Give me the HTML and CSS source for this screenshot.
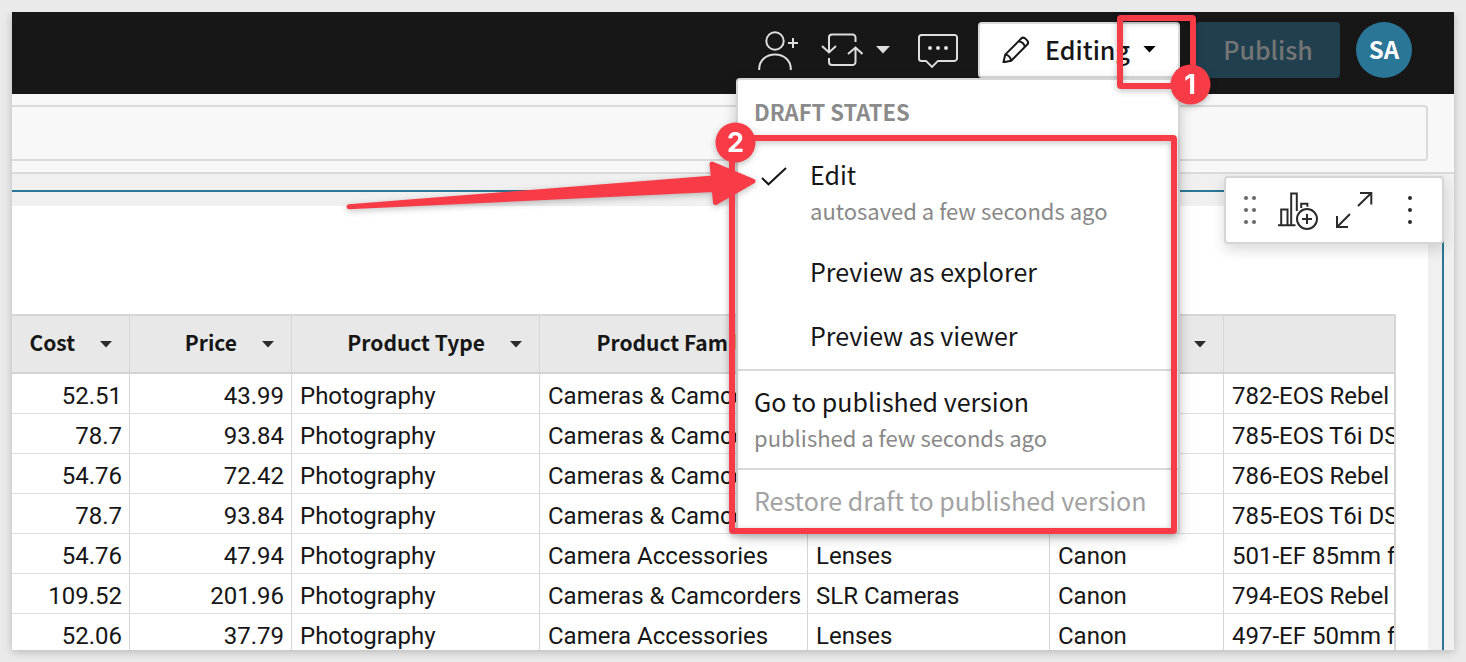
FILE: index.html
```html
<!DOCTYPE html>
<html lang="en">
<head>
<meta charset="utf-8">
<meta name="viewport" content="width=device-width, initial-scale=1">
<title>Workbook draft</title>
<link rel="stylesheet" href="styles.css">
</head>
<body>
<div class="frame">
  <header class="topbar">
    <button class="icon-btn" type="button" aria-label="Share">
      <svg class="line-icon" width="40" height="40" viewBox="758 30 40 40"><circle cx="775" cy="41" r="8.7"/><path d="M759.2 70v-1c0-8.600 7-14.500 15.800-14.500s15.800 5.900 15.800 14.500v1M788 43h10M793 38v10"/></svg>
    </button>
    <button class="icon-btn sync" type="button" aria-label="Refresh">
      <svg class="line-icon" width="42" height="40" viewBox="821 30 42 40"><path d="M829 52V37.500a3 3 0 0 1 3-3h20.500a3 3 0 0 1 3 3V42M855.500 48v14a3 3 0 0 1-3 3H832a3 3 0 0 1-3-3v-4M822 46l7 6.500 7-6.500M848 54l7.500-6.500 7 6.500"/></svg>
      <svg width="14" height="8" viewBox="0 0 14 8"><path class="light" d="M0 0h14L7 7.500z"/></svg>
    </button>
    <button class="icon-btn chat" type="button" aria-label="Comments">
      <svg class="line-icon" width="40" height="40" viewBox="918 30 40 40"><path d="M921.500 34.900h33a2.500 2.500 0 0 1 2.500 2.500v21a2.500 2.500 0 0 1-2.500 2.500H938l-6 6-6-6h-4.500a2.500 2.500 0 0 1-2.500-2.500v-21a2.500 2.500 0 0 1 2.500-2.500z"/><g class="light"><circle cx="930" cy="48" r="2"/><circle cx="938" cy="48" r="2"/><circle cx="946" cy="48" r="2"/></g></svg>
    </button>
    <div class="mode">
      <button class="mode-btn" type="button" aria-haspopup="menu" aria-expanded="true">
        <svg class="dark-line" width="28" height="28" viewBox="1002 35 28 28"><path d="M1003.500 62.300l1.700-7.700 16.300-16.300c2.300-2.300 8.300 3.200 6 6l-16.300 16.400zM1018.700 41.200c3 .3 5.800 2.800 6 5.800M1005.200 54.600c3 .3 5.800 3 6 6.100"/></svg>
        <span>Editing</span>
        <svg width="13" height="7" viewBox="0 0 14 8"><path d="M0 0h14L7 7.500z"/></svg>
      </button>
      <div class="menu" role="menu">
        <h2 class="menu-title">DRAFT STATES</h2>
        <button class="item indent checked" type="button" role="menuitem">
          <svg class="check" width="26" height="20" viewBox="761 166 26 20"><path d="M762 178l6.500 6.300L786 168"/></svg>
          <span class="label">Edit</span>
          <span class="note">autosaved a few seconds ago</span>
        </button>
        <button class="item indent" type="button" role="menuitem"><span class="label">Preview as explorer</span></button>
        <button class="item indent" type="button" role="menuitem"><span class="label">Preview as viewer</span></button>
        <button class="item divided" type="button" role="menuitem">
          <span class="label">Go to published version</span>
          <span class="note">published a few seconds ago</span>
        </button>
        <button class="item divided" type="button" role="menuitem" disabled><span class="label">Restore draft to published version</span></button>
      </div>
      <svg class="callouts" width="880" height="540" viewBox="340 10 880 540" aria-hidden="true">
        <rect class="outline" x="1120" y="18" width="73" height="68" rx="1"/>
        <rect class="outline" x="732" y="138" width="442" height="393" rx="1"/>
        <path class="arrow" d="M349 206.700L713.500 178l-1.500-14 41 17.200-37.500 21.300-1.300-13z"/>
        <circle cx="1190.500" cy="84.500" r="20"/>
        <circle cx="735.500" cy="142.500" r="20"/>
        <text x="1190" y="94">1</text>
        <text x="735.500" y="152">2</text>
      </svg>
    </div>
    <button class="publish" type="button" disabled>Publish</button>
    <button class="avatar" type="button" aria-label="Account">SA</button>
  </header>
  <div class="formula-bar"><input class="formula" type="text" aria-label="Formula"></div>
  <main class="canvas">
    <section class="element">
      <div class="sheet">
        <div class="table-wrap">
          <table>
            <colgroup><col class="c-cost"><col class="c-price"><col class="c-type"><col class="c-family"><col class="c-line"><col class="c-brand"><col></colgroup>
            <thead>
              <tr>
                <th><div>Cost<svg class="caret" viewBox="0 0 14 8"><path d="M0 0h14L7 7.500z"/></svg></div></th>
                <th><div>Price<svg class="caret" viewBox="0 0 14 8"><path d="M0 0h14L7 7.500z"/></svg></div></th>
                <th><div>Product Type<svg class="caret" viewBox="0 0 14 8"><path d="M0 0h14L7 7.500z"/></svg></div></th>
                <th><div>Product Family<svg class="caret" viewBox="0 0 14 8"><path d="M0 0h14L7 7.500z"/></svg></div></th>
                <th><div><svg class="caret" viewBox="0 0 14 8"><path d="M0 0h14L7 7.500z"/></svg></div></th>
                <th><div><svg class="caret" viewBox="0 0 14 8"><path d="M0 0h14L7 7.500z"/></svg></div></th>
                <th></th>
              </tr>
            </thead>
            <tbody>
              <tr><td class="num">52.51</td><td class="num">43.99</td><td>Photography</td><td>Cameras &amp; Camcorders</td><td></td><td></td><td>782-EOS Rebel</td></tr>
              <tr><td class="num">78.7</td><td class="num">93.84</td><td>Photography</td><td>Cameras &amp; Camcorders</td><td></td><td></td><td>785-EOS T6i DSLR</td></tr>
              <tr><td class="num">54.76</td><td class="num">72.42</td><td>Photography</td><td>Cameras &amp; Camcorders</td><td></td><td></td><td>786-EOS Rebel</td></tr>
              <tr><td class="num">78.7</td><td class="num">93.84</td><td>Photography</td><td>Cameras &amp; Camcorders</td><td></td><td></td><td>785-EOS T6i DSLR</td></tr>
              <tr><td class="num">54.76</td><td class="num">47.94</td><td>Photography</td><td>Camera Accessories</td><td>Lenses</td><td>Canon</td><td>501-EF 85mm f</td></tr>
              <tr><td class="num">109.52</td><td class="num">201.96</td><td>Photography</td><td>Cameras &amp; Camcorders</td><td>SLR Cameras</td><td>Canon</td><td>794-EOS Rebel</td></tr>
              <tr><td class="num">52.06</td><td class="num">37.79</td><td>Photography</td><td>Camera Accessories</td><td>Lenses</td><td>Canon</td><td>497-EF 50mm f</td></tr>
            </tbody>
          </table>
        </div>
      </div>
    </section>
    <div class="element-tools">
      <button type="button" aria-label="Move"><svg class="grip" width="14" height="30" viewBox="1243 195 14 30"><circle cx="1246" cy="198" r="2"/><circle cx="1254" cy="198" r="2"/><circle cx="1246" cy="210" r="2"/><circle cx="1254" cy="210" r="2"/><circle cx="1246" cy="222" r="2"/><circle cx="1254" cy="222" r="2"/></svg></button>
      <button type="button" aria-label="Add chart"><svg class="tool" width="42" height="40" viewBox="1277 190 42 40"><path d="M1278 225.300h17.500M1281.200 225v-15.500h6.300V225M1291.200 225v-31.500h5.600V211M1301.200 208v-4.200h6.200v3"/><circle cx="1307" cy="219" r="10"/><path d="M1302 219h10M1307 214v10"/></svg></button>
      <button type="button" aria-label="Maximize"><svg class="tool" width="38" height="38" viewBox="1335 191 38 38"><path d="M1360 193h11.300v11.500M1371 193.300L1358 206M1337 216v11h11M1337.300 226.700L1350 214"/></svg></button>
      <button type="button" aria-label="More"><svg class="more" width="6" height="30" viewBox="1407 195 6 30"><circle cx="1410" cy="198" r="2"/><circle cx="1410" cy="210" r="2"/><circle cx="1410" cy="222" r="2"/></svg></button>
    </div>
  </main>
</div>
</body>
</html>
```

FILE: styles.css
```css
* { box-sizing: border-box; }

body {
  margin: 0;
  padding: 12px;
  background: #eaeaea;
  color: #161616;
  font-family: "Noto Sans CJK SC", "Open Sans", sans-serif;
  font-size: 24px;
}

button {
  margin: 0;
  padding: 0;
  border: 0;
  background: none;
  color: inherit;
  font: inherit;
}

svg { display: block; flex: none; }

.frame {
  display: flex;
  flex-direction: column;
  height: calc(100vh - 24px);
  overflow: hidden;
  background: #f0f0f0;
  box-shadow: 0 2px 8px rgba(0, 0, 0, 0.22);
  clip-path: inset(0 -12px -12px -12px);
}

.topbar {
  position: relative;
  z-index: 2;
  display: flex;
  flex: none;
  align-items: center;
  justify-content: flex-end;
  gap: 16px;
  padding: 10px 42px 16px 16px;
  background: #171717;
}

.icon-btn { display: flex; align-items: center; gap: 13px; }
.sync { margin-left: 7px; }
.chat { margin: 0 4px 0 12px; }
.line-icon { fill: none; stroke: #dedede; stroke-width: 2; }
.light { fill: #dedede; stroke: none; }

.mode { position: relative; width: 202px; }

.mode-btn {
  display: flex;
  align-items: center;
  justify-content: center;
  width: 100%;
  height: 56px;
  padding: 0 0 2px;
  border: 2px solid #dadada;
  border-radius: 4px;
  background: #fff;
  font-size: 25px;
  font-weight: 500;
}
.mode-btn span { margin: 0 13px 0 15px; }
.dark-line { fill: none; stroke: #161616; stroke-width: 2; stroke-linejoin: round; }

.menu {
  position: absolute;
  top: 56px;
  right: 0;
  width: 444px;
  padding: 13px 0 0;
  border: 2px solid #d6d6d6;
  border-radius: 4px;
  background: #fff;
  box-shadow: 0 4px 14px rgba(0, 0, 0, 0.2);
}

.menu-title {
  margin: 0 16px 13px;
  color: #8b8b8b;
  font-size: 22px;
  font-weight: 700;
  line-height: 36px;
}

.item {
  position: relative;
  display: block;
  width: 100%;
  padding: 12px 16px;
  text-align: left;
}
.indent { padding-left: 72px; }
.label { display: block; font-size: 25px; line-height: 40px; }
.note { display: block; color: #888; font-size: 22px; line-height: 33px; }
.divided { margin-top: 2px; padding-top: 10px; border-top: 2px solid #dadada; }
.item:disabled { color: #a2a2a2; }
.check { position: absolute; left: 23px; top: 24px; fill: none; stroke: #161616; stroke-width: 2; }

.callouts {
  position: absolute;
  top: -12px;
  right: -40px;
  fill: #f83c47;
  filter: drop-shadow(0 2px 3px rgba(0, 0, 0, 0.25));
  pointer-events: none;
}
.outline { fill: none; stroke: #f83c47; stroke-width: 6; }
.arrow { stroke: #f83c47; stroke-width: 5; stroke-linejoin: round; }
.callouts text {
  fill: #fff;
  font-family: Inter, sans-serif;
  font-size: 27px;
  font-weight: 700;
  text-anchor: middle;
}

.publish {
  width: 144px;
  height: 56px;
  padding-bottom: 2px;
  border-radius: 4px;
  background: #204050;
  color: #757575;
  font-size: 25px;
  font-weight: 500;
}

.avatar {
  width: 56px;
  height: 56px;
  padding-bottom: 4px;
  border-radius: 50%;
  background: #2a7696;
  color: #fff;
  font-weight: 700;
}

.formula-bar {
  flex: none;
  padding: 11px 26px 11px 0;
  border-bottom: 2px solid #dadada;
  background: #f8f8f8;
}
.formula {
  display: block;
  width: 100%;
  height: 56px;
  border: 2px solid #dadada;
  border-left: 0;
  border-radius: 0 4px 4px 0;
  background: transparent;
}

.canvas {
  position: relative;
  display: flex;
  flex: 1;
  min-height: 0;
  padding: 16px 10px 0 0;
}

.element {
  display: flex;
  flex: 1;
  min-width: 0;
  padding: 14px 14px 0 0;
  border-top: 2px solid #2a7696;
  border-right: 2px solid #2a7696;
}

.sheet {
  flex: 1;
  min-width: 0;
  padding: 108px 32px 0 0;
  overflow: hidden;
  background: #fff;
}

.table-wrap { border: 2px solid #d6d6d6; border-width: 2px 2px 0 0; }

table {
  width: 100%;
  border-collapse: separate;
  border-spacing: 0;
  table-layout: fixed;
}
.c-cost { width: 118px; }
.c-price { width: 162px; }
.c-type { width: 248px; }
.c-family { width: 268px; }
.c-line { width: 242px; }
.c-brand { width: 174px; }

th, td {
  overflow: hidden;
  border-right: 1px solid #d6d6d6;
  white-space: nowrap;
}
th:last-child, td:last-child { border-right: 0; }

th {
  height: 58px;
  padding: 0 17px 4px 0;
  border-bottom: 2px solid #d2d2d2;
  background: #e8e8e8;
  font-size: 21px;
  font-weight: 700;
}
th div { display: flex; align-items: center; justify-content: flex-end; gap: 25px; }
.caret { width: 12px; height: 7px; margin-top: 4px; fill: #2b2b2b; }

td {
  height: 40px;
  padding: 4px 7px 0 8px;
  border-bottom: 1px solid #dedede;
  font-family: Roboto, sans-serif;
  line-height: 32px;
  text-overflow: clip;
}
.num { text-align: right; }

.element-tools {
  position: absolute;
  top: 2px;
  right: 10px;
  display: flex;
  align-items: center;
  gap: 16px;
  height: 68px;
  padding: 0 29px 0 17px;
  border: 2px solid #d6d6d6;
  border-radius: 4px;
  background: #fff;
  box-shadow: 0 6px 14px rgba(0, 0, 0, 0.14);
}
.element-tools button:first-child { margin-right: 4px; }
.element-tools button:last-child { margin-left: 18px; }
.grip { fill: #666; }
.tool { fill: none; stroke: #2b2b2b; stroke-width: 2; }
.more { fill: #2b2b2b; }
```
